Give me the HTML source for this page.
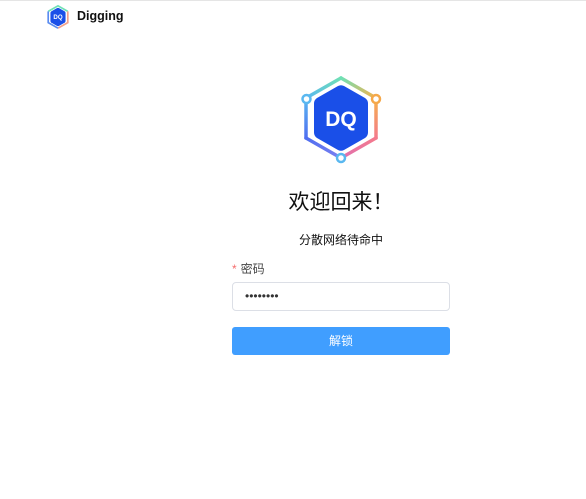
<!DOCTYPE html>
<html><head><meta charset="utf-8"><style>
body{margin:0;width:586px;height:499px;background:#fff;font-family:"Liberation Sans","Noto Sans CJK SC",sans-serif;position:relative;overflow:hidden}
.top{position:absolute;left:0;top:0;width:586px;height:1px;background:#e5e5e5}
.brand{position:absolute;left:77px;top:9px;font-size:12.5px;font-weight:bold;color:#111}
.t{position:absolute;left:0;width:586px;text-align:center;color:#111}
.lbl{position:absolute;left:232px;top:260px;font-size:12px;color:#444}
.lbl span{color:#f56c6c;margin-right:4px}
.inp{position:absolute;left:232px;top:282px;border:1px solid #dcdfe6;border-radius:4px;font-size:12px;line-height:27px;padding-left:12px;box-sizing:border-box;width:218px;height:29px;color:#333}
.btn{position:absolute;left:232px;top:327px;width:218px;height:28px;background:#409eff;border-radius:3px;color:#fff;font-size:12px;text-align:center;line-height:28px}
</style></head><body>
<div class="top"></div>
<svg style="position:absolute;left:291px;top:68px" width="100" height="100" viewBox="0 0 100 100">
<defs>
<linearGradient id="a" gradientUnits="userSpaceOnUse" x1="15" y1="30" x2="50" y2="10"><stop offset="0" stop-color="#5ab8f0"/><stop offset="1" stop-color="#6fe0b5"/></linearGradient>
<linearGradient id="b" gradientUnits="userSpaceOnUse" x1="50" y1="10" x2="85" y2="30"><stop offset="0" stop-color="#6fe0b5"/><stop offset="1" stop-color="#f5b14a"/></linearGradient>
<linearGradient id="c" gradientUnits="userSpaceOnUse" x1="85" y1="30" x2="85" y2="70"><stop offset="0" stop-color="#f5b14a"/><stop offset="1" stop-color="#f47a8c"/></linearGradient>
<linearGradient id="d" gradientUnits="userSpaceOnUse" x1="85" y1="70" x2="50" y2="90"><stop offset="0" stop-color="#f47a8c"/><stop offset="1" stop-color="#e070b0"/></linearGradient>
<linearGradient id="e" gradientUnits="userSpaceOnUse" x1="50" y1="90" x2="15" y2="70"><stop offset="0" stop-color="#7a80f0"/><stop offset="1" stop-color="#4f6ef0"/></linearGradient>
<linearGradient id="f" gradientUnits="userSpaceOnUse" x1="15" y1="70" x2="15" y2="30"><stop offset="0" stop-color="#4f6ef0"/><stop offset="1" stop-color="#5ab8f0"/></linearGradient>
</defs>
<g stroke-width="3.5" stroke-linecap="round" fill="none">
<line x1="15" y1="30" x2="50" y2="10" stroke="url(#a)"/>
<line x1="50" y1="10" x2="85" y2="30" stroke="url(#b)"/>
<line x1="85" y1="30" x2="85" y2="70" stroke="url(#c)"/>
<line x1="85" y1="70" x2="50" y2="90" stroke="url(#d)"/>
<line x1="50" y1="90" x2="15" y2="70" stroke="url(#e)"/>
<line x1="15" y1="70" x2="15" y2="30" stroke="url(#f)"/>
</g>
<path d="M47,18 Q50,16.5 53,18 L74,30 Q77,32 77,35.5 L77,64.5 Q77,68 74,70 L53,82 Q50,83.5 47,82 L26,70 Q23,68 23,64.5 L23,35.5 Q23,32 26,30 Z" fill="#1a4fe8"/>
<text x="50" y="58" text-anchor="middle" font-family="Liberation Sans,sans-serif" font-weight="bold" font-size="21" fill="#fff">DQ</text>
<circle cx="15.5" cy="31" r="4" fill="#fff" stroke="#5ab8f0" stroke-width="2.5"/>
<circle cx="85" cy="31" r="4" fill="#fff" stroke="#f5a84a" stroke-width="2.5"/>
<circle cx="50" cy="90" r="4" fill="#fff" stroke="#5ab8f0" stroke-width="2.5"/>
</svg>
<svg style="position:absolute;left:44px;top:3px" width="28" height="28" viewBox="0 0 100 100">
<g stroke-width="6" fill="none">
<polyline points="15,30 50,10 85,30" stroke="#6fe0b5"/>
<polyline points="85,30 85,70 50,90" stroke="#f3a08a"/>
<polyline points="50,90 15,70 15,30" stroke="#5a8cf0"/>
</g>
<path d="M47,18 Q50,16.5 53,18 L74,30 Q77,32 77,35.5 L77,64.5 Q77,68 74,70 L53,82 Q50,83.5 47,82 L26,70 Q23,68 23,64.5 L23,35.5 Q23,32 26,30 Z" fill="#1a4fe8"/>
<text x="50" y="58" text-anchor="middle" font-family="Liberation Sans,sans-serif" font-weight="bold" font-size="22" fill="#fff">DQ</text>
</svg>
<div class="brand">Digging</div>
<div class="t" style="top:187px;font-size:21px;left:48px;font-family:'Noto Sans CJK SC',sans-serif;line-height:28px">欢迎回来！</div>
<div class="t" style="top:231px;font-size:12px;left:48px">分散网络待命中</div>
<div class="lbl"><span>*</span>密码</div>
<div class="inp">••••••••</div>
<div class="btn">解锁</div>
</body></html>
